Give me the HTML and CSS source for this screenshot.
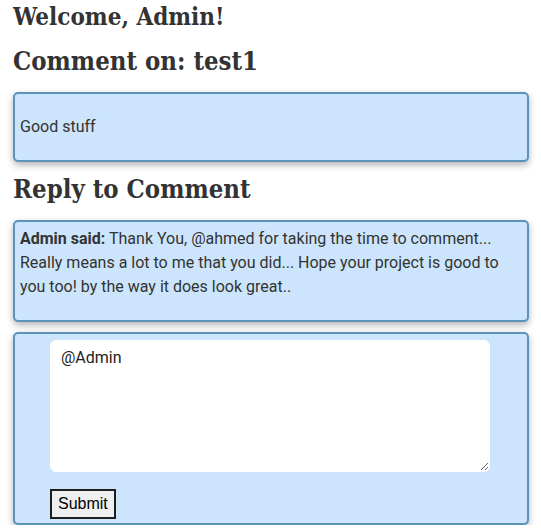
FILE: index.html
```html
<!DOCTYPE html>
<html>
<head>
<meta charset="utf-8">
<link rel="stylesheet" href="styles.css">
</head>
<body>
<div class="page">
  <h1 class="welcome">Welcome, Admin!</h1>
  <h2 class="title">Comment on: test1</h2>
  <div class="card">
    <p class="card-text">Good stuff</p>
  </div>
  <h2 class="title reply-title">Reply to Comment</h2>
  <div class="card card-reply">
    <p class="card-text reply-text"><strong>Admin said:</strong> Thank You, @ahmed for taking the time to comment... Really means a lot to me that you did... Hope your project is good to you too! by the way it does look great..</p>
  </div>
  <form class="card card-form">
    <textarea class="reply-input">@Admin</textarea>
    <button class="submit" type="button">Submit</button>
  </form>
</div>
</body>
</html>
```

FILE: styles.css
```css
* { box-sizing: border-box; }
body {
  margin: 0;
  background: #ffffff;
  color: #333333;
  font-family: Roboto, "Liberation Sans", sans-serif;
}
.page {
  padding: 0 12px 0 13px;
}
.welcome {
  font-family: "DejaVu Serif Condensed", "DejaVu Serif", serif;
  font-stretch: condensed;
  font-weight: bold;
  font-size: 24px;
  line-height: 30px;
  margin: 2px 0 0 0;
}
.title {
  font-family: "DejaVu Serif Condensed", "DejaVu Serif", serif;
  font-stretch: condensed;
  font-weight: bold;
  font-size: 25.5px;
  line-height: 34px;
  margin: 12px 0 0 0;
}
.reply-title {
  margin-top: 10px;
}
.card {
  background: #cce5fc;
  border: 2px solid #5b93b9;
  border-radius: 5px;
  box-shadow: 0 3px 7px rgba(0, 0, 0, 0.3);
  padding: 5px;
  margin-top: 14px;
}
.card-reply {
  margin-top: 14px;
}
.card-text {
  margin: 16px 0;
  font-size: 16px;
  line-height: 24px;
}
.reply-text {
  margin: 0 0 16px 0;
}
.card-form {
  margin-top: 10px;
  padding: 6px 35px 4px 35px;
  display: flex;
  flex-direction: column;
  align-items: flex-start;
}
.reply-input {
  width: 440px;
  height: 132px;
  border: 1px solid #ffffff;
  border-radius: 6px;
  background: #ffffff;
  padding: 7px 10px;
  font-family: Roboto, sans-serif;
  font-size: 16px;
  line-height: 20px;
  color: #222222;
  resize: vertical;
  margin: 0;
  display: block;
}
.submit {
  margin-top: 17px;
  font-family: "Liberation Sans", Arial, sans-serif;
  font-size: 16px;
  background: #efefef;
  border: 2px solid #1e1e1e;
  color: #000000;
  padding: 4px 6px;
  height: 30px;
}
```
